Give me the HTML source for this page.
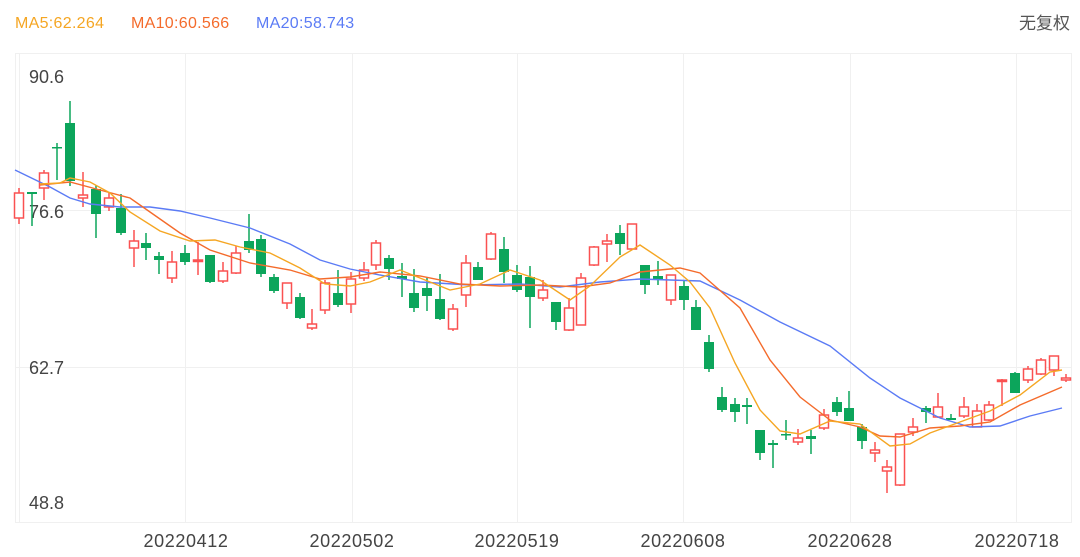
<!DOCTYPE html>
<html><head><meta charset="utf-8"><style>
html,body{margin:0;padding:0;background:#fff;width:1080px;height:557px;overflow:hidden}
svg{display:block}
text{font-family:"Liberation Sans","Noto Sans CJK SC",sans-serif}
</style></head><body>
<svg id="s" width="1080" height="557" xmlns="http://www.w3.org/2000/svg">
<text x="15" y="28" font-size="16" letter-spacing="0.3" fill="#f5a623">MA5:62.264</text>
<text x="131" y="28" font-size="16" letter-spacing="0.3" fill="#f46b2b">MA10:60.566</text>
<text x="256" y="28" font-size="16" letter-spacing="0.3" fill="#5b7bf5">MA20:58.743</text>
<text x="1070" y="29" font-size="17" fill="#555" text-anchor="end">无复权</text>
<g stroke="#f0f0f0" stroke-width="1" fill="none">
<rect x="15.5" y="53.5" width="1056" height="469"/>
<line x1="19.5" y1="53" x2="19.5" y2="522"/>
<line x1="185.5" y1="53" x2="185.5" y2="522"/>
<line x1="352.5" y1="53" x2="352.5" y2="522"/>
<line x1="517.5" y1="53" x2="517.5" y2="522"/>
<line x1="683.5" y1="53" x2="683.5" y2="522"/>
<line x1="850.5" y1="53" x2="850.5" y2="522"/>
<line x1="1016.5" y1="53" x2="1016.5" y2="522"/>
<line x1="15" y1="210.5" x2="1071" y2="210.5"/>
<line x1="15" y1="367.5" x2="1071" y2="367.5"/>
</g>
<g font-size="18" fill="#444">
<text x="29" y="83">90.6</text>
<text x="29" y="218">76.6</text>
<text x="29" y="374">62.7</text>
<text x="29" y="509">48.8</text>
</g>
<g font-size="18" letter-spacing="0.6" fill="#444" text-anchor="middle">
<text x="186" y="547">20220412</text>
<text x="352" y="547">20220502</text>
<text x="517" y="547">20220519</text>
<text x="683" y="547">20220608</text>
<text x="850" y="547">20220628</text>
<text x="1017" y="547">20220718</text>
</g>
<g id="c"></g>
<polyline fill="none" stroke="#5b7bf5" stroke-width="1.4" points="15,170 50,187 70,198 90,204 120,207 150,207 180,211 210,218 250,228 290,244 320,260 350,269 380,275 420,282 470,285 520,284 560,287 600,282 640,279 700,281 740,300 780,322 830,346 870,378 900,398 940,418 970,427 1000,426 1030,416 1062,408"/>
<polyline fill="none" stroke="#f46b2b" stroke-width="1.4" points="40,185 70,182 100,190 130,198 150,212 180,233 210,250 250,263 290,270 320,279 350,277 380,272 420,276 460,284 500,286 540,285 580,287 610,283 640,272 680,268 700,273 740,308 770,360 800,397 830,420 860,427 880,436 900,437 930,428 960,426 990,422 1020,405 1062,387"/>
<polyline fill="none" stroke="#f5a623" stroke-width="1.4" points="40,184 60,183 70,178 90,182 110,193 130,212 160,231 190,241 215,240 240,247 270,253 300,268 325,284 350,286 370,282 400,270 430,282 450,290 480,284 510,270 540,280 570,300 590,286 620,257 640,245 670,265 690,282 710,308 735,363 760,410 780,431 800,434 830,421 860,424 890,446 910,444 930,433 960,422 990,411 1020,395 1050,372 1062,370"/>
</svg>
<script>
var d=[
[19,'r',193,218,188,224],[32,'g',192,194,192,226],[44,'r',173,188,170,200],[57,'g',147,148,143,180],[70,'g',123,181,101,186],
[83,'r',195,198,172,207],[96,'g',189,214,185,238],[109,'r',198,207,193,211],[121,'g',208,233,194,235],[134,'r',241,248,230,267],
[146,'g',243,248,233,260],[159,'g',256,260,252,274],[172,'r',262,278,251,283],[185,'g',253,262,245,265],[198,'r',260,261,242,275],
[210,'g',255,282,255,283],[223,'r',271,281,262,283],[236,'r',253,273,246,274],[249,'g',241,250,214,253],[261,'g',239,274,235,277],
[274,'g',277,291,274,293],[287,'r',283,303,283,309],[300,'g',297,318,293,319],[312,'r',324,328,309,330],[325,'r',283,310,280,314],
[338,'g',293,305,270,307],[351,'r',279,304,272,313],[364,'r',270,278,262,281],[376,'r',243,265,240,270],[389,'g',258,269,255,280],
[402,'g',276,279,263,297],[414,'g',293,308,269,312],[427,'g',288,296,278,311],[440,'g',299,319,274,320],[453,'r',309,329,304,331],
[466,'r',263,295,255,307],[478,'g',267,280,262,280],[491,'r',234,259,232,260],[504,'g',249,272,237,283],[517,'g',275,290,265,292],
[530,'g',277,297,266,328],[543,'r',290,298,280,301],[556,'g',302,322,302,330],[569,'r',308,330,298,331],[581,'r',278,325,273,325],
[594,'r',247,265,246,266],[607,'r',241,244,234,262],[620,'g',233,244,225,255],[632,'r',224,249,224,250],[645,'g',265,285,265,294],
[658,'g',276,279,261,285],[671,'r',275,300,275,305],[684,'g',286,300,280,310],[696,'g',307,330,300,330],[709,'g',342,369,335,372],
[722,'g',397,410,387,412],[735,'g',404,412,398,422],[747,'g',405,407,398,424],[760,'g',430,453,430,460],[773,'g',443,445,440,468],
[786,'g',434,435,420,440],[798,'r',438,442,429,445],[811,'g',436,439,430,454],[824,'r',415,428,409,430],[837,'g',402,412,397,416],
[849,'g',408,421,391,421],[862,'g',427,441,424,449],[875,'r',450,453,442,462],[887,'r',467,471,460,493],[900,'r',434,485,434,486],
[913,'r',427,432,418,436],[926,'g',408,412,406,423],[938,'r',407,417,393,418],[951,'g',418,420,414,420],[964,'r',407,416,397,418],
[977,'r',411,427,404,427],[989,'r',405,420,401,421],[1002,'r',380,381,379,406],[1015,'g',373,393,372,393],[1028,'r',369,380,366,383],
[1041,'r',360,374,358,375],[1054,'r',356,370,356,376],[1066,'r',378,380,374,382]];
var h='';
d.forEach(function(c){var x=c[0],col=c[1]=='r'?'#fa5151':'#0ca55b',t=c[2],b=c[3];
h+='<line x1="'+x+'" y1="'+c[4]+'" x2="'+x+'" y2="'+c[5]+'" stroke="'+col+'" stroke-width="1.5"/>';
if(c[1]=='r')h+='<rect x="'+(x-4.5)+'" y="'+t+'" width="9" height="'+Math.max(b-t,1.5)+'" fill="#fff" stroke="'+col+'" stroke-width="1.5"/>';
else h+='<rect x="'+(x-5)+'" y="'+t+'" width="10" height="'+Math.max(b-t,1.5)+'" fill="'+col+'"/>';});
document.getElementById('c').innerHTML=h;
</script>
</body></html>
